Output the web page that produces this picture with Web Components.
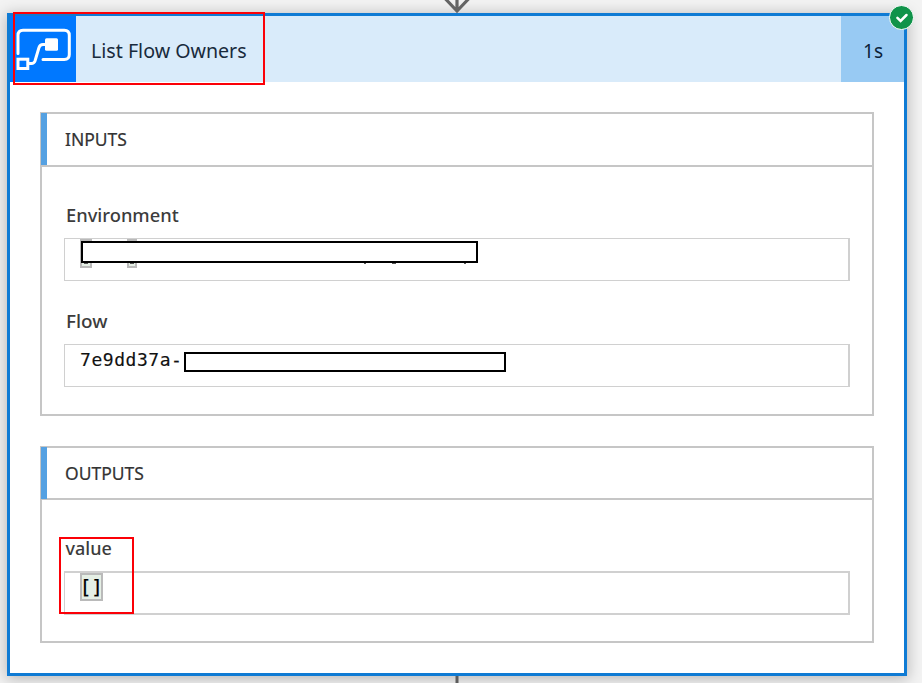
<!DOCTYPE html>
<html lang="en"><head><meta charset="utf-8"><title>List Flow Owners</title>
<style>
html,body{margin:0;width:922px;height:683px;overflow:hidden;background:#f3f3f3}
body{font-family:"Noto Sans","Open Sans",sans-serif;color:#333}
</style></head><body>
<flow-canvas>
  <action-card heading="List Flow Owners" duration="1s">
    <io-panel heading="INPUTS" fit="62">
      <io-field label="Environment" fit="113"><redacted-value></redacted-value></io-field>
      <io-field label="Flow" fit="42"><mono-value>7e9dd37a-</mono-value><redaction-box></redaction-box></io-field>
    </io-panel>
    <io-panel heading="OUTPUTS" fit="79" class="out">
      <io-field label="value" fit="46" class="thick"><bracket-value>[]</bracket-value></io-field>
    </io-panel>
  </action-card>
</flow-canvas>
<script>
const define=(name,html,setup)=>customElements.define(name,class extends HTMLElement{
  connectedCallback(){
    if(this.shadowRoot)return;
    this.attachShadow({mode:'open'}).innerHTML=html;
    if(setup)setup(this,this.shadowRoot);
  }
});
// A single line of text, scaled horizontally to the width given in "fit".
define('fit-text',`<style>:host{display:block;white-space:nowrap}span{display:inline-block;transform-origin:0 50%}</style><span><slot></slot></span>`,(el,r)=>{
  const s=r.querySelector('span');
  const w=s.offsetWidth;
  if(w)s.style.transform='scaleX('+(+el.getAttribute('fit')/w)+')';
});
const fit=(text,w)=>`<fit-text fit="${w}">${text}</fit-text>`;
define('flow-logo',`<style>:host{display:block;width:66px;height:66px;background:#0078ff}svg{display:block}</style>
<svg width="66" height="66" viewBox="10 16 66 66" fill="none" stroke="#fff" stroke-width="3">
<path d="M18 53.500V35.500Q18 30.300 23 30.300H64.300Q69.300 30.300 69.300 35.500V54.500Q69.300 59.500 64.300 59.500H43" stroke-linecap="round"/>
<path d="M29 63.500H31.500Q34 63.500 35 61L39 47.500Q40 44.500 43 44.500H46"/>
<rect x="45" y="38.300" width="13" height="12.500" rx="1.500" fill="#fff" stroke="none"/>
<rect x="18" y="59.200" width="9.800" height="9.300"/></svg>`);
define('status-badge',`<style>:host{display:block;width:26px;height:26px}svg{display:block}</style>
<svg width="26" height="26" viewBox="0 0 26 26"><circle cx="13.500" cy="13.500" r="12" fill="#10934a" stroke="#fff" stroke-width="1"/><path d="M9.400 13.900l3.200 3.100 5.900-6" fill="none" stroke="#fff" stroke-width="2.500" stroke-linecap="round"/></svg>`);
define('redaction-box',`<style>:host{display:block;box-sizing:border-box;width:322px;height:20px;margin-top:7px;border:2px solid #000;background:#fff}</style>`);
define('redacted-value',`<style>:host{display:block;position:relative;width:398px;height:30px}
i{position:absolute;box-sizing:border-box;height:29px;border:2px solid #bababa;background:#e5efe5}
.a{left:0;width:12px}.b{left:47px;width:10px}
b{position:absolute;left:1px;top:2px;width:397px;height:22px;box-sizing:border-box;border:2px solid #000;background:#fff}
u{position:absolute;top:24px;height:1px;background:#555}</style>
<i class="a"></i><i class="b"></i><b></b><u style="left:4px;width:4px"></u><u style="left:50px;width:4px"></u><u style="left:284px;width:2px"></u><u style="left:312px;width:4px"></u><u style="left:384px;width:2px"></u>`);
define('mono-value',`<style>:host{display:block;font:18px/24px "DejaVu Sans Mono",monospace;letter-spacing:.55px;color:#111;width:103.500px;margin-top:3px;-webkit-text-stroke:.15px #111}</style><slot></slot>`);
define('bracket-value',`<style>:host{display:block;box-sizing:border-box;width:23px;height:28px;border:2px solid #bababa;background:#e5efe5;font:20px/25px "DejaVu Sans Mono",monospace;letter-spacing:-.5px;color:#000;text-indent:-2.500px;-webkit-text-stroke:.2px #000}</style><slot></slot>`);
define('io-field',`<style>:host{display:block;height:106px}
.label{padding-left:1.500px;font:500 18px/26px "Noto Sans";height:36px;color:#3c3c3c}
.box{display:flex;align-items:flex-start;box-sizing:border-box;height:43px;border:1px solid #d0d0d0;border-right-width:2px;padding-left:15px}
:host(.thick) .box{height:44px;border-width:2px 2px 2px 1px}</style>
<div class="label"></div><div class="box"><slot></slot></div>`,(el,r)=>{
  r.querySelector('.label').innerHTML=fit(el.getAttribute('label'),el.getAttribute('fit'));
});
define('io-panel',`<style>:host{display:block;box-sizing:border-box;width:834px;height:304px;border:2px solid #c6c6c6}
:host(.out){height:197px}
header{position:relative;box-sizing:border-box;height:53px;border-bottom:2px solid #c6c6c6;padding:12px 0 0 23px;font:17.500px/26px "Noto Sans";color:#333;-webkit-text-stroke:.2px #333}
header::before{content:"";position:absolute;left:-1px;top:-1px;width:6px;height:52px;background:#55a1e2}
:host(.out) header{height:52px}
main{padding:35px 22px 0}</style><header></header><main><slot></slot></main>`,(el,r)=>{
  r.querySelector('header').innerHTML=fit(el.getAttribute('heading'),el.getAttribute('fit'));
});
define('action-card',`<style>:host{display:block;position:relative;box-sizing:border-box;width:900px;height:663px;border:3px solid #0f7bd4;background:#fff;box-shadow:0 2px 14px 1px rgba(0,0,0,.25)}
header{display:flex;height:66px;background:#d9ebfa;font:20px/66px "Noto Sans";color:#182a3c}
.title{flex:1;padding:1px 0 0 14.500px}.time{width:63px;background:#98caf3;box-sizing:border-box;padding:1px 0 0 21.500px;color:#0b2238}
fit-text{height:65px;line-height:67px}
main{display:flex;flex-direction:column;gap:30px;padding:30px 0 0 30px}
status-badge{position:absolute;right:-10px;top:-12px}</style>
<header><flow-logo></flow-logo><div class="title"></div><div class="time"></div></header><main><slot></slot></main><status-badge></status-badge>`,(el,r)=>{
  r.querySelector('.title').innerHTML=fit(el.getAttribute('heading'),156);
  r.querySelector('.time').innerHTML=fit(el.getAttribute('duration'),20);
});
define('red-outline',`<style>:host{position:absolute;box-sizing:border-box;border:2px solid #fb0007}</style>`);
define('flow-connector',`<style>:host{position:absolute;left:442px}svg{display:block}</style><svg width="30" height="14" viewBox="0 0 30 14"></svg>`,(el,r)=>{
  r.querySelector('svg').innerHTML=el.hasAttribute('arrow')?'<path d="M15 0V11M3.500 -1L15 11L26.500 -1" fill="none" stroke="#646464" stroke-width="3.200"/>':'<path d="M15 0V14" stroke="#5c5c5c" stroke-width="3"/>';
});
define('flow-canvas',`<style>:host{display:block;position:relative;box-sizing:border-box;width:922px;height:683px;padding:13px 0 0 7px;overflow:hidden;background:#f3f3f3}
.a{left:13px;top:12px;width:252px;height:73px}.b{left:59px;top:537px;width:75px;height:77px}.top{top:0}.bottom{top:676px}</style>
<slot></slot><flow-connector class="top" arrow></flow-connector><flow-connector class="bottom"></flow-connector><red-outline class="a"></red-outline><red-outline class="b"></red-outline>`);
</script></body></html>
